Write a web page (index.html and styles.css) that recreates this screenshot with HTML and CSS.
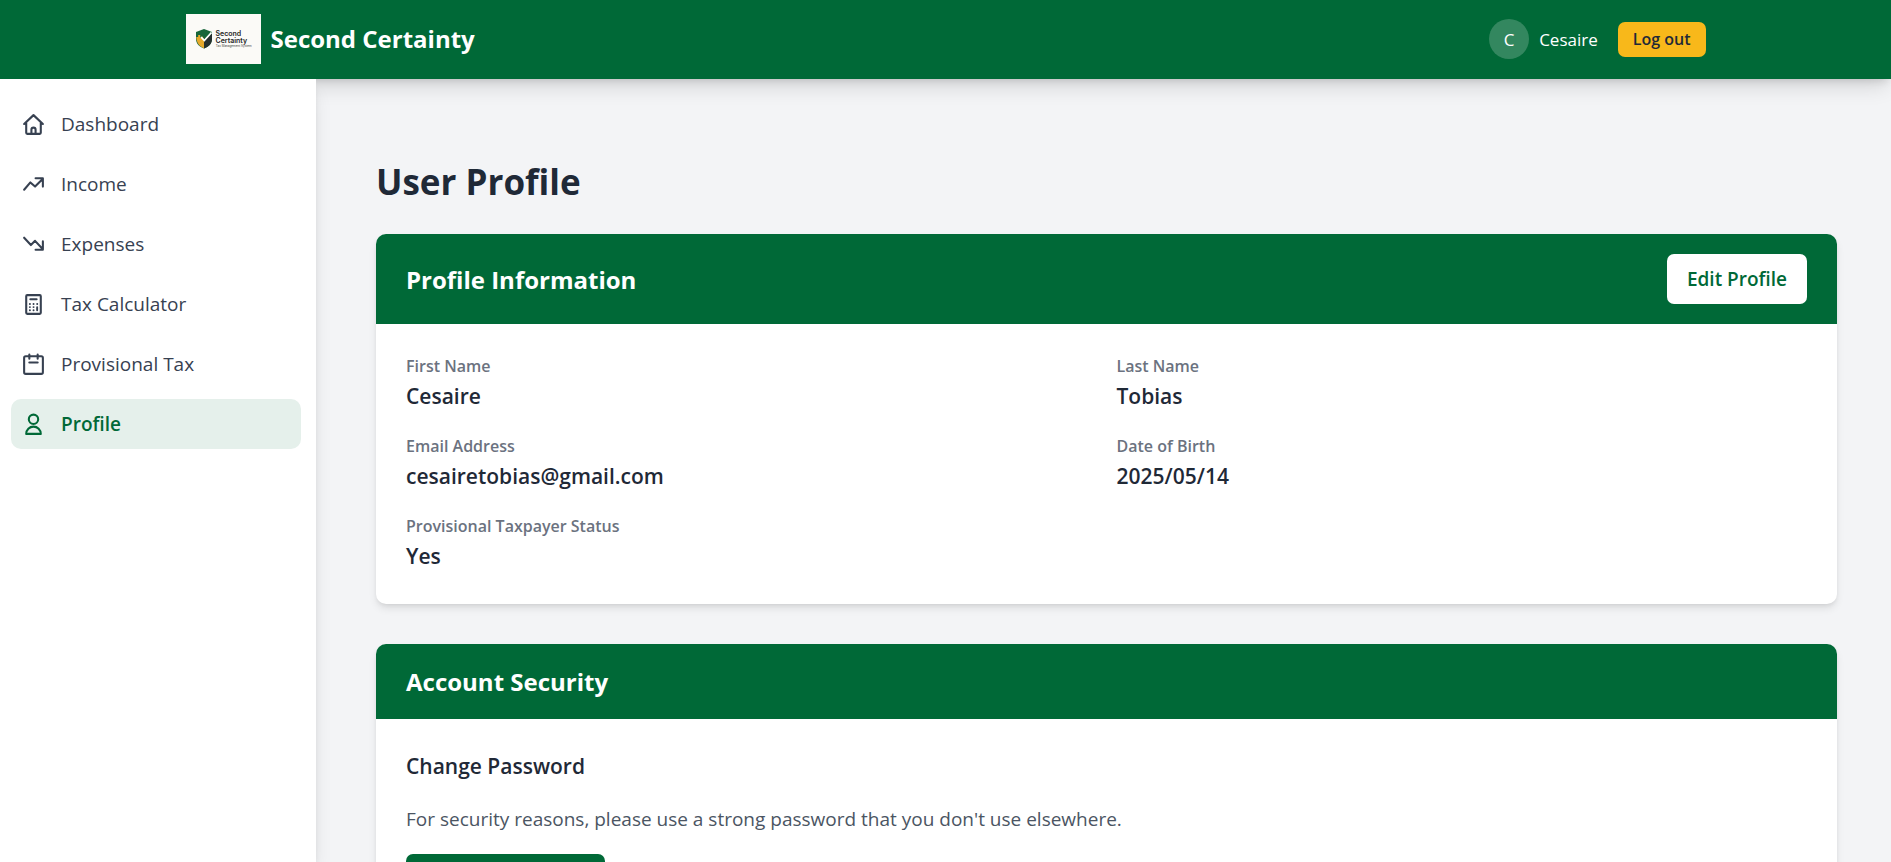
FILE: index.html
```html
<!DOCTYPE html>
<html lang="en">
<head>
<meta charset="utf-8">
<meta name="viewport" content="width=device-width, initial-scale=1">
<title>Second Certainty</title>
<link rel="stylesheet" href="styles.css">
</head>
<body>
<div class="app">
  <header class="topbar">
    <div class="topbar-inner">
      <a class="brand" href="#">
        <svg class="brand-logo" viewBox="0 0 75 50" role="img" aria-label="Second Certainty logo">
          <rect width="75" height="50" fill="#fbfaf7"/>
          <path d="M18 15 L26 18 V25 C26 30 22.500 32.500 18 34.500 C13.500 32.500 10 30 10 25 V18 Z" fill="#17663a"/>
          <path d="M10.300 23 H12.200 V21 H14.200 V24 H16 V22 L18 25 V34.300 C13.500 32.300 10.500 29 10.300 23 Z" fill="#e6a92b"/>
          <path d="M18 27 L26 19.500 V25 C26 30 22.500 32.500 18 34.500 Z" fill="#26302e"/>
          <path d="M15 23 L18.300 26.500 L25.500 18.500" fill="none" stroke="#fff" stroke-width="1.800"/>
          <text class="logo-name" x="29.500" y="22">Second</text>
          <text class="logo-name" x="29.500" y="29">Certainty</text>
          <text class="logo-tag" x="29.800" y="33">Tax Management System</text>
        </svg>
        <span class="brand-name">Second Certainty</span>
      </a>
      <div class="account">
        <span class="avatar">C</span>
        <span class="account-name">Cesaire</span>
        <button class="logout" type="button">Log out</button>
      </div>
    </div>
  </header>
  <div class="shell">
    <nav class="sidebar" aria-label="Main">
      <a class="nav-item" href="#">
        <svg class="icon" viewBox="0 0 24 24"><path d="M3 11.500 12 3l9 8.500M5 10v10a1 1 0 0 0 1 1h12a1 1 0 0 0 1-1V10M10 21v-4a2 2 0 0 1 4 0v4"/></svg>
        Dashboard
      </a>
      <a class="nav-item" href="#">
        <svg class="icon" viewBox="0 0 24 24"><path d="m3 17 6-7 4.500 4L21 6.500M14 6h7v8"/></svg>
        Income
      </a>
      <a class="nav-item" href="#">
        <svg class="icon" viewBox="0 0 24 24"><path d="m3 5.500 6.500 7 4-4 7.500 8M14 17h7V9"/></svg>
        Expenses
      </a>
      <a class="nav-item" href="#">
        <svg class="icon" viewBox="0 0 24 24"><rect x="5" y="3" width="14" height="18" rx="1"/><path d="M9 7h6"/><path class="keys" d="M8.500 11.500h.1M12 11.500h.1M15.500 11.500h.1M8.500 14.500h.1M12 14.500h.1M8.500 17.500h.1M12 17.500h.1M15.500 14.500v3"/></svg>
        Tax Calculator
      </a>
      <a class="nav-item" href="#">
        <svg class="icon" viewBox="0 0 24 24"><rect x="3" y="4" width="18" height="17" rx="1.500"/><path d="M8 2.500v4M16 2.500v4M8 10h8"/></svg>
        Provisional Tax
      </a>
      <a class="nav-item active" href="#" aria-current="page">
        <svg class="icon" viewBox="0 0 24 24"><circle cx="12" cy="7" r="4.500"/><path d="M5 21a7 7 0 0 1 14 0z"/></svg>
        Profile
      </a>
    </nav>
    <main class="content">
      <h1 class="page-title">User Profile</h1>
      <section class="card">
        <div class="card-header">
          <h2 class="card-title">Profile Information</h2>
          <button class="edit" type="button">Edit Profile</button>
        </div>
        <dl class="details">
          <div><dt>First Name</dt><dd>Cesaire</dd></div>
          <div><dt>Last Name</dt><dd>Tobias</dd></div>
          <div><dt>Email Address</dt><dd>cesairetobias@gmail.com</dd></div>
          <div><dt>Date of Birth</dt><dd>2025/05/14</dd></div>
          <div><dt>Provisional Taxpayer Status</dt><dd>Yes</dd></div>
        </dl>
      </section>
      <section class="card">
        <div class="card-header">
          <h2 class="card-title">Account Security</h2>
        </div>
        <div class="security">
          <h3 class="security-title">Change Password</h3>
          <p class="security-text">For security reasons, please use a strong password that you don't use elsewhere.</p>
          <button class="primary" type="button" aria-label="Change Password"></button>
        </div>
      </section>
    </main>
  </div>
</div>
</body>
</html>
```

FILE: styles.css
```css
:root {
  --green: #006937;
  --gold: #f8b81a;
  --ink: #1f2937;
  --shadow-md: 0 5px 8px -1px rgb(0 0 0 / 10%), 0 2px 5px -2px rgb(0 0 0 / 10%);
  --shadow-lg: 0 12px 19px -4px rgb(0 0 0 / 12%), 0 5px 8px -3px rgb(0 0 0 / 12%);
}

* {
  box-sizing: border-box;
  margin: 0;
}

body {
  background: #f3f4f6;
  color: var(--ink);
  font: 19px/30px "Open Sans", "Noto Sans", sans-serif;
}

button {
  border: 0;
  font-family: inherit;
  cursor: pointer;
}

a {
  color: inherit;
  text-decoration: none;
}

.app {
  display: flex;
  flex-direction: column;
  height: 100vh;
}

.topbar {
  position: relative;
  padding: 14px 40px 15px;
  background: var(--green);
  color: #fff;
  box-shadow: var(--shadow-lg);
}

.topbar-inner,
.brand,
.account {
  display: flex;
  align-items: center;
}

.topbar-inner {
  justify-content: space-between;
  max-width: 1520px;
  margin: 0 auto;
}

.brand {
  gap: 10px;
}

.brand-logo {
  width: 75px;
  height: 50px;
}

.logo-name {
  fill: #262626;
  font: 600 7px Inter, sans-serif;
}

.logo-tag {
  fill: #444;
  font: 3px Inter, sans-serif;
}

.brand-name {
  font-size: 24px;
  font-weight: 700;
}

.account-name,
.logout,
.avatar {
  font-size: 17px;
  line-height: 25px;
}

.avatar {
  width: 40px;
  padding: 8px 0 7px;
  border-radius: 50%;
  background: rgb(255 255 255 / 20%);
  text-align: center;
}

.account-name {
  margin: 0 20px 0 10px;
}

.logout {
  padding: 5px 15px;
  border-radius: 7px;
  background: var(--gold);
  color: var(--ink);
  font-size: 16px;
  font-weight: 600;
}

.shell {
  display: flex;
  flex: 1;
  min-height: 0;
}

.sidebar {
  position: relative;
  display: flex;
  flex-direction: column;
  flex: 0 0 316px;
  gap: 10px;
  padding: 20px 15px 20px 11px;
  background: #fff;
  box-shadow: var(--shadow-lg);
  clip-path: inset(0 -30px 0 0);
}

.nav-item {
  display: flex;
  align-items: center;
  gap: 15px;
  padding: 10px;
  border-radius: 10px;
  color: #374151;
}

.nav-item.active {
  background: #e5f0eb;
  color: var(--green);
  font-weight: 600;
}

.icon {
  width: 25px;
  height: 25px;
  fill: none;
  stroke: currentColor;
  stroke-width: 2;
  stroke-linejoin: round;
  stroke-linecap: round;
}

.keys {
  stroke-width: 1.8;
}

.content {
  flex: 1;
  min-width: 0;
  padding: 80px 54px 40px 60px;
  overflow-y: auto;
  scrollbar-width: none;
}

.page-title {
  margin-bottom: 30px;
  font-size: 35px;
  line-height: 45px;
}

.card {
  margin-bottom: 40px;
  border-radius: 10px;
  background: #fff;
  box-shadow: var(--shadow-md);
  overflow: hidden;
}

.card-header {
  display: flex;
  align-items: center;
  justify-content: space-between;
  padding: 20px 30px;
  background: var(--green);
  color: #fff;
}

.card-title {
  font-size: 24px;
  line-height: 35px;
}

.edit,
.primary {
  padding: 10px 20px;
  border-radius: 7px;
  font-size: 19px;
  line-height: 30px;
  font-weight: 600;
}

.edit {
  background: #fff;
  color: var(--green);
}

.primary {
  min-width: 199px;
  min-height: 50px;
  background: var(--green);
  color: #fff;
}

.details {
  display: grid;
  grid-template-columns: 1fr 1fr;
  gap: 20px;
  padding: 30px;
}

.details dt {
  color: #6b7280;
  font-size: 16px;
  line-height: 25px;
  font-weight: 600;
}

.details dd,
.security-title {
  font-size: 21px;
  line-height: 35px;
  font-weight: 600;
}

.security {
  padding: 30px;
}

.security-text {
  margin: 20px 0;
  color: #4b5563;
}
```
